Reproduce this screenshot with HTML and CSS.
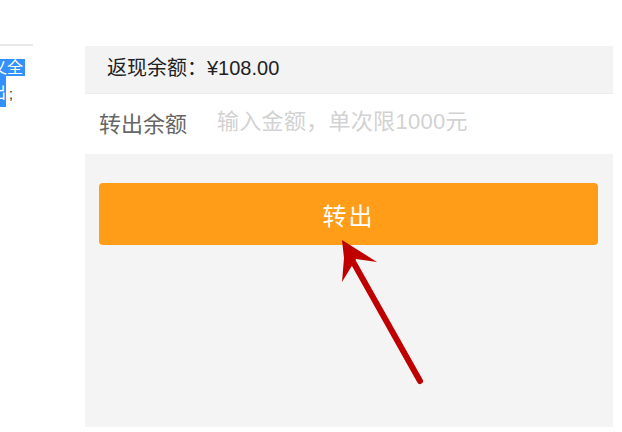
FILE: index.html
```html
<!DOCTYPE html>
<html lang="zh-CN">

<head>
  <meta charset="UTF-8" />
  <meta name="viewport" content="width=device-width, initial-scale=1.0" />
  <title>转出余额</title>
  <link rel="stylesheet" href="styles.css">
</head>

<body>

  <!-- 左侧残留的选中文字 -->
  <div class="side">
    <div class="side-line"></div>
    <div class="sel sel-top">乂全</div>
    <div class="sel-row">
      <div class="sel sel-bottom">出</div>
      <span class="semi">;</span>
    </div>
  </div>

  <div class="panel">
    <div class="balance">返现余额：¥108.00</div>

    <div class="form-row">
      <span class="label">转出余额</span>
      <input class="amount" type="text" placeholder="输入金额，单次限1000元">
    </div>

    <div class="btn-wrap">
      <button class="submit">转出</button>
    </div>
  </div>

  <!-- 标注箭头 -->
  <svg class="arrow" width="622" height="432" viewBox="0 0 622 432">
    <line x1="420" y1="381" x2="347" y2="251" stroke="#c00000" stroke-width="6" stroke-linecap="round" />
    <polygon points="342,240 377,262 356,259 342,282 344,258" fill="#c00000" />
  </svg>

</body>

</html>
```

FILE: styles.css
```css
* {
  box-sizing: border-box;
}

html,
body {
  margin: 0;
  padding: 0;
  background: #fff;
  font-family: 'Liberation Sans', 'Noto Sans CJK SC', sans-serif;
}

body {
  display: flex;
  width: 622px;
  height: 432px;
  overflow: hidden;
}

.side {
  width: 85px;
  flex-shrink: 0;
  padding-top: 44px;
}

.side-line {
  width: 33px;
  height: 2px;
  background: #e9e9e9;
  margin-bottom: 13px;
}

.sel {
  background: #3390ff;
  color: #fff;
  font-size: 16px;
  line-height: 17px;
  white-space: nowrap;
  overflow: hidden;
  direction: rtl;
}

.sel-top {
  width: 25px;
  height: 17px;
  padding-right: 2px;
}

.sel-row {
  display: flex;
  align-items: flex-end;
}

.sel-bottom {
  width: 6px;
  height: 31px;
  line-height: 28px;
  padding-top: 3px;
}

.semi {
  font-size: 14px;
  line-height: 18px;
  margin-left: 3px;
  margin-bottom: 4px;
  color: #222;
}

.panel {
  width: 528px;
  height: 381px;
  margin-top: 46px;
  background: #f4f4f4;
}

.balance {
  height: 48px;
  line-height: 44px;
  padding-left: 22px;
  font-size: 20px;
  color: #222;
  background: #f3f3f3;
  border-bottom: 1px solid #ececec;
}

.form-row {
  height: 60px;
  background: #fff;
  display: flex;
  align-items: center;
  padding: 0 0 4px 14px;
  gap: 30px;
}

.label {
  font-size: 22px;
  color: #666;
}

.amount {
  flex: 1;
  border: none;
  outline: none;
  padding: 0;
  font-family: inherit;
  font-size: 22px;
  letter-spacing: 0.3px;
  background: transparent;
}

.amount::placeholder {
  color: #d2d2d2;
}

.btn-wrap {
  padding: 29px 15px 0 14px;
}

.submit {
  width: 100%;
  height: 62px;
  border: none;
  border-radius: 4px;
  background: #ff9c18;
  color: #fff;
  font-family: inherit;
  font-size: 24px;
  letter-spacing: 2px;
}

.arrow {
  position: absolute;
  top: 0;
  left: 0;
  pointer-events: none;
}
```
